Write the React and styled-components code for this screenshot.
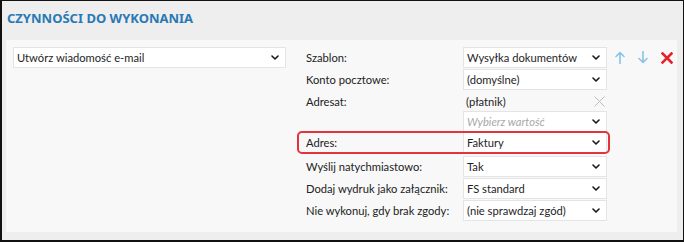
import React from 'react';
import styled, {createGlobalStyle} from 'styled-components';

const GlobalStyle = createGlobalStyle`
  html, body {
    margin: 0;
    padding: 0;
    background: #ffffff;
  }
  * { box-sizing: border-box; }
`;

const Frame = styled.div`
  width: 684px;
  height: 242px;
  display: flex;
  flex-direction: column;
  background: #eeeeee;
  border-top: 1px solid #111;
  border-right: 1px solid #111;
  border-bottom: 2px solid #111;
  border-left: 2px solid #111;
  font-family: Lato, "Noto Sans", sans-serif;
  font-size: 11.2px;
  color: #1e1e1e;
`;

const Title = styled.h2`
  margin: 0;
  height: 39px;
  padding: 8px 0 0 5px;
  color: #2a79b5;
  font-family: "Noto Sans", sans-serif;
  font-size: 13px;
  font-weight: 700;
`;

const Panel = styled.div`
  margin-left: 4px;
  width: 671px;
  height: 192px;
  background: #f8f8f8;
  display: flex;
  padding: 7px 0 0 7px;
`;

const LeftColumn = styled.div`
  width: 293px;
`;

const Select = styled.div`
  display: flex;
  align-items: center;
  justify-content: space-between;
  width: ${({$width}) => $width}px;
  height: 21px;
  padding: 0 6px 0 3px;
  background: #ffffff;
  border: 1px solid #e4e4e4;
  white-space: nowrap;
  color: ${({$placeholder}) => $placeholder ? '#a8a8a8' : '#1e1e1e'};
  font-style: ${({$placeholder}) => $placeholder ? 'italic' : 'normal'};
`;

const Form = styled.div`
  display: flex;
  flex-direction: column;
  align-items: flex-start;
`;

const Row = styled.div`
  position: relative;
  display: flex;
  align-items: center;
  height: ${({$height}) => $height || 21}px;
  margin-bottom: ${({$gap}) => $gap ?? 1}px;

  ${({$highlight}) => $highlight && `
    &::before {
      content: "";
      position: absolute;
      left: -9px;
      right: -3px;
      top: -1px;
      bottom: -1px;
      border: 2px solid #e2343a;
      border-radius: 5px;
      pointer-events: none;
    }
  `}
`;

const Label = styled.div`
  width: 157px;
  white-space: nowrap;
  color: #222222;
`;

const PlainValue = styled.div`
  display: flex;
  align-items: center;
  justify-content: space-between;
  width: 144px;
  padding: 0 2px 0 3px;
`;

const Actions = styled.div`
  display: flex;
  align-items: center;
  gap: 13px;
  margin-left: 8px;
`;

const Chevron = () => (
  <svg width="8" height="5" viewBox="0 0 8 5">
    <polyline points="1,1 4,4 7,1" fill="none" stroke="#1a1a1a" strokeWidth="1.6" strokeLinecap="round" strokeLinejoin="round"/>
  </svg>
);

const ClearIcon = () => (
  <svg width="11" height="11" viewBox="0 0 11 11">
    <path d="M0.5 0.5 L10.5 10.5 M10.5 0.5 L0.5 10.5" stroke="#bdbdbd" strokeWidth="1"/>
  </svg>
);

const ArrowUp = () => (
  <svg width="10" height="13" viewBox="0 0 10 13">
    <path d="M5 1.5 V12.5 M1 5.5 L5 1.5 L9 5.5" fill="none" stroke="#88c4e8" strokeWidth="1.6" strokeLinecap="round" strokeLinejoin="round"/>
  </svg>
);

const ArrowDown = () => (
  <svg width="10" height="13" viewBox="0 0 10 13">
    <path d="M5 0.5 V11.5 M1 7.5 L5 11.5 L9 7.5" fill="none" stroke="#88c4e8" strokeWidth="1.6" strokeLinecap="round" strokeLinejoin="round"/>
  </svg>
);

const RemoveIcon = () => (
  <svg width="12" height="12" viewBox="0 0 12 12">
    <path d="M1.5 1.5 L10.5 10.5 M10.5 1.5 L1.5 10.5" stroke="#e2242a" strokeWidth="2.6" strokeLinecap="square"/>
  </svg>
);

const Dropdown = ({value, width = 144, placeholder}) => (
  <Select $width={width} $placeholder={placeholder}>
    <span>{value}</span>
    <Chevron/>
  </Select>
);

const bottomRows = [
  {label: 'Wyślij natychmiastowo:', value: 'Tak'},
  {label: 'Dodaj wydruk jako załącznik:', value: 'FS standard'},
  {label: 'Nie wykonuj, gdy brak zgody:', value: '(nie sprawdzaj zgód)'},
];

const App = () => (
  <>
    <GlobalStyle/>
    <Frame>
      <Title>CZYNNOŚCI DO WYKONANIA</Title>
      <Panel>
        <LeftColumn>
          <Dropdown value="Utwórz wiadomość e-mail" width={273}/>
        </LeftColumn>
        <Form>
          <Row>
            <Label>Szablon:</Label>
            <Dropdown value="Wysyłka dokumentów"/>
            <Actions>
              <ArrowUp/>
              <ArrowDown/>
              <RemoveIcon/>
            </Actions>
          </Row>
          <Row>
            <Label>Konto pocztowe:</Label>
            <Dropdown value="(domyślne)"/>
          </Row>
          <Row $height={20} $gap={0}>
            <Label>Adresat:</Label>
            <PlainValue>
              <span>(płatnik)</span>
              <ClearIcon/>
            </PlainValue>
          </Row>
          <Row $gap={0}>
            <Label/>
            <Dropdown value="Wybierz wartość" placeholder/>
          </Row>
          <Row $highlight $gap={3}>
            <Label>Adres:</Label>
            <Dropdown value="Faktury"/>
          </Row>
          {bottomRows.map(row => (
            <Row key={row.label}>
              <Label>{row.label}</Label>
              <Dropdown value={row.value}/>
            </Row>
          ))}
        </Form>
      </Panel>
    </Frame>
  </>
);

export default App;
